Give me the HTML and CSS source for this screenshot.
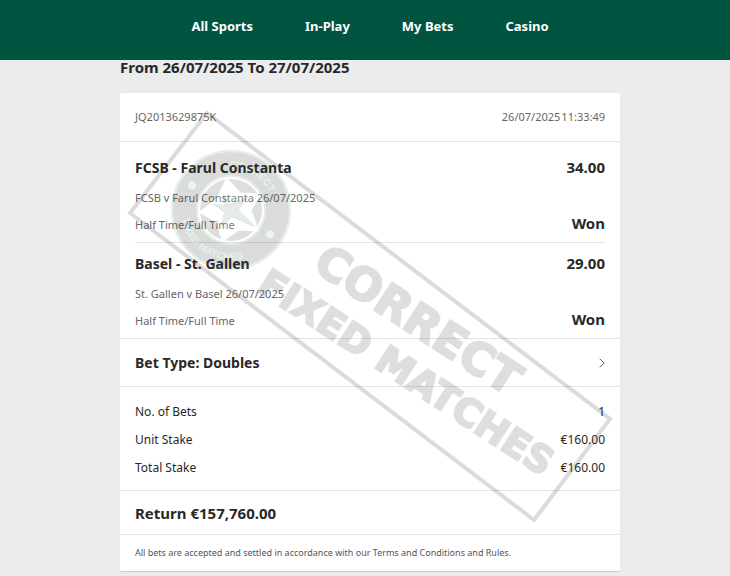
FILE: index.html
```html
<!DOCTYPE html>
<html lang="en">
<head>
<meta charset="utf-8">
<title>My Bets</title>
<link rel="stylesheet" href="styles.css">
</head>
<body>
<header class="topbar">
  <nav class="nav">
    <a href="#">All Sports</a>
    <a href="#">In-Play</a>
    <a href="#">My Bets</a>
    <a href="#">Casino</a>
  </nav>
</header>
<main class="page">
  <h1 class="range">From 26/07/2025 To 27/07/2025</h1>
  <article class="slip">
    <div class="slip-head row">
      <span>JQ2013629875K</span>
      <span class="stamp"><span>26/07/2025</span><span>11:33:49</span></span>
    </div>
    <section class="selections">
      <div class="selection">
        <h2 class="row title"><span>FCSB - Farul Constanta</span><span class="odds">34.00</span></h2>
        <p class="fixture">FCSB v Farul Constanta 26/07/2025</p>
        <div class="row market"><span>Half Time/Full Time</span><strong>Won</strong></div>
      </div>
      <div class="selection">
        <h2 class="row title"><span>Basel - St. Gallen</span><span class="odds">29.00</span></h2>
        <p class="fixture">St. Gallen v Basel 26/07/2025</p>
        <div class="row market"><span>Half Time/Full Time</span><strong>Won</strong></div>
      </div>
    </section>
    <button class="bet-type row" type="button">
      <span>Bet Type: Doubles</span>
      <svg class="chevron" viewBox="0 0 6 10" aria-hidden="true"><path d="M.7.7 5.2 5 .7 9.3"/></svg>
    </button>
    <dl class="stakes">
      <div class="row"><dt>No. of Bets</dt><dd>1</dd></div>
      <div class="row"><dt>Unit Stake</dt><dd>€160.00</dd></div>
      <div class="row"><dt>Total Stake</dt><dd>€160.00</dd></div>
    </dl>
    <div class="return row">Return €157,760.00</div>
    <p class="terms">All bets are accepted and settled in accordance with our Terms and Conditions and Rules.</p>
    <svg class="watermark" viewBox="0 0 500 478" aria-hidden="true">
      <path class="frame" d="M87 20 10 120 414 427 490 326Z"/>
      <circle class="disc" cx="111" cy="117" r="46"/>
      <circle class="rim" cx="111" cy="117" r="59"/>
      <circle class="rim" cx="111" cy="117" r="34"/>
      <circle class="inner" cx="111" cy="117" r="31"/>
      <path class="star" d="M107 87 120 101 139 102 130 117 137 137 118 136 103 147 98 129 81 119 97 107Z"/>
      <path class="star-line" d="M103 102 110 112 126 106 117 117 134 133 112 123 102 132 105 119 96 112 106 113Z"/>
      <g transform="translate(111 117) rotate(32)">
        <path id="arc-top" class="guide" d="M-42 0A42 42 0 0 1 42 0"/>
        <path id="arc-bottom" class="guide" d="M-50 0A50 50 0 0 0 50 0"/>
        <text class="seal"><textPath href="#arc-top" startOffset="50%">CORRECT</textPath></text>
        <text class="seal"><textPath href="#arc-bottom" startOffset="50%">FIXED MATCHES</textPath></text>
        <circle class="dot" cx="-46" cy="0" r="4"/>
        <circle class="dot" cx="46" cy="0" r="4"/>
      </g>
      <g class="words">
        <text class="word-large" transform="translate(191 176) rotate(33)">CORRECT</text>
        <text class="word-small" transform="translate(135 197) rotate(33)">FIXED MATCHES</text>
      </g>
    </svg>
  </article>
</main>
</body>
</html>
```

FILE: styles.css
```css
* { box-sizing: border-box; }
body {
  margin: 0;
  min-height: 100vh;
  background: #ebeced;
  color: #282828;
  font: 12px/28px "Noto Sans", "Open Sans", sans-serif;
}
h1, h2, p, dl, dd { margin: 0; }
.topbar {
  display: flex;
  justify-content: center;
  align-items: center;
  height: 60px;
  padding-bottom: 8px;
  background: #005440;
}
.nav { display: flex; gap: 52px; padding-left: 10px; }
.nav a { color: #fff; font-size: 13px; font-weight: 700; text-decoration: none; }
.page { max-width: 510px; margin: 0 auto; padding-left: 10px; }
.range { font-size: 15px; line-height: 15px; padding-bottom: 18px; }
.slip {
  position: relative;
  background: #fff;
  border-radius: 2px;
  box-shadow: 0 1px 1px #c9cbcc;
}
.row { display: flex; justify-content: space-between; align-items: center; }
.slip-head {
  height: 49px;
  padding: 0 15px;
  border-bottom: 1px solid #e2e3e4;
  color: #666;
  font-size: 11px;
}
.stamp { display: flex; gap: 1px; }
.selections { padding: 5px 15px 0; border-bottom: 1px solid #e2e3e4; }
.selection { padding: 6px 0 5px; }
.selection + .selection { border-top: 1px solid #e2e3e4; }
.title { font-size: 14px; line-height: 30px; align-items: baseline; }
.odds { font-size: 15px; line-height: 28px; }
.fixture { color: #666; font-size: 11px; line-height: 30px; }
.market { color: #666; font-size: 11px; line-height: 24px; align-items: flex-start; }
.market strong { color: #282828; font-size: 15px; line-height: 20px; }
.bet-type {
  width: 100%;
  height: 48px;
  padding: 0 15px;
  border: 0;
  border-bottom: 1px solid #e2e3e4;
  background: none;
  color: inherit;
  font: inherit;
  font-size: 14px;
  font-weight: 700;
}
.chevron { width: 6px; height: 10px; fill: none; stroke: #666; }
.stakes { padding: 11px 15px 8px; border-bottom: 1px solid #e2e3e4; }
.return {
  height: 44px;
  padding: 0 15px;
  border-bottom: 1px solid #e2e3e4;
  font-size: 15px;
  font-weight: 700;
}
.terms { padding: 0 15px; font-size: 9px; line-height: 36px; color: #555; }
.watermark {
  position: absolute;
  inset: 0;
  width: 100%;
  height: 100%;
  opacity: .17;
  pointer-events: none;
}
.frame { fill: none; stroke: #333; stroke-width: 4; }
.disc { fill: none; stroke: #333; stroke-width: 24; }
.rim { fill: none; stroke: #4bae62; stroke-width: 2; }
.inner { fill: #444; }
.star { fill: #fff; stroke: #fff; stroke-width: 3; stroke-linejoin: round; }
.star-line { fill: #888; stroke: #3d9f54; stroke-width: 2; }
.guide { fill: none; }
.seal { fill: #62b97a; font: 700 10px "Liberation Sans", sans-serif; text-anchor: middle; }
.dot { fill: #79d693; }
.words { fill: #444; stroke: #444; stroke-width: 2; }
.word-large { font: 700 45px "DejaVu Sans", sans-serif; }
.word-small { font: 700 38px "DejaVu Sans", sans-serif; }
```
